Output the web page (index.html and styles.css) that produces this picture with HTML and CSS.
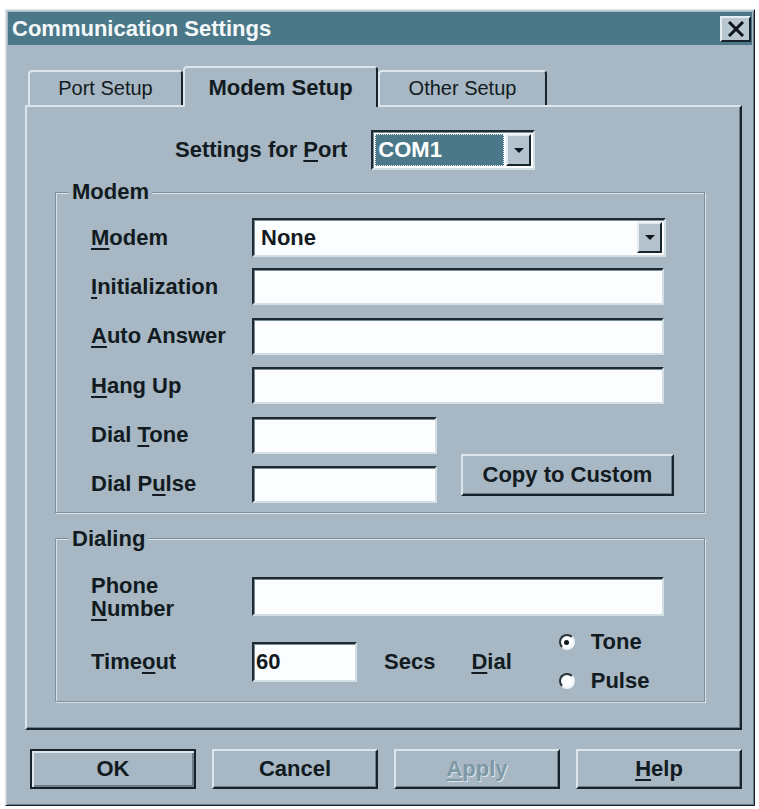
FILE: index.html
```html
<!DOCTYPE html>
<html>
<head>
<meta charset="utf-8">
<title>Communication Settings</title>
<link rel="stylesheet" href="styles.css">
</head>
<body>
<div class="dialog">
  <div class="titlebar">
    <span class="title">Communication Settings</span>
    <span class="close"><svg width="18" height="16" viewBox="0 0 18 16"><path d="M2 1 L16 15 M16 1 L2 15" stroke="#0e161b" stroke-width="3" fill="none"/></svg></span>
  </div>

  <div class="tabs">
    <div class="tab">Port Setup</div>
    <div class="tab active">Modem Setup</div>
    <div class="tab">Other Setup</div>
  </div>

  <div class="panel">
    <div class="port-row">
      <span class="lbl">Settings for <u>P</u>ort</span>
      <div class="combo port-combo">
        <span class="sel">COM1</span>
        <span class="drop"><i class="tri"></i></span>
      </div>
    </div>

    <fieldset class="group modem">
      <legend>Modem</legend>
      <div class="mgrid">
        <span class="lbl"><u>M</u>odem</span>
        <div class="combo wide"><span class="val">None</span><span class="drop"><i class="tri"></i></span></div>

        <span class="lbl"><u>I</u>nitialization</span>
        <div class="field wide"></div>

        <span class="lbl"><u>A</u>uto Answer</span>
        <div class="field wide"></div>

        <span class="lbl"><u>H</u>ang Up</span>
        <div class="field wide"></div>

        <span class="lbl">Dial <u>T</u>one</span>
        <div class="field short"></div>

        <span class="btn copy">Copy to Custom</span>

        <span class="lbl">Dial P<u>u</u>lse</span>
        <div class="field short"></div>
      </div>
    </fieldset>

    <fieldset class="group dialing">
      <legend>Dialing</legend>
      <div class="phone-row">
        <span class="lbl two">Phone<br><u>N</u>umber</span>
        <div class="field phone"></div>
      </div>
      <div class="timeout-row">
        <span class="lbl tlabel">Time<u>o</u>ut</span>
        <div class="field tfield"><span class="val">60</span></div>
        <span class="lbl secs">Secs</span>
        <span class="lbl dial"><u>D</u>ial</span>
        <div class="radios">
          <div class="radio-item"><span class="radio on"></span><span class="lbl">Tone</span></div>
          <div class="radio-item"><span class="radio"></span><span class="lbl">Pulse</span></div>
        </div>
      </div>
    </fieldset>
  </div>

  <div class="buttons">
    <span class="btn default">OK</span>
    <span class="btn">Cancel</span>
    <span class="btn disabled"><u>A</u>pply</span>
    <span class="btn"><u>H</u>elp</span>
  </div>
</div>
</body>
</html>
```

FILE: styles.css
```css
html, body {
  margin: 0;
  padding: 0;
  background: #ffffff;
}

body {
  font-family: "Liberation Sans", Arial, sans-serif;
  color: #121b21;
}

.dialog {
  margin: 9px 0 0 5px;
  width: 750px;
  height: 797px;
  box-sizing: border-box;
  background: #a7b7c3;
  border: 1px solid;
  border-color: #dbe5eb #17232b #17232b #dbe5eb;
  box-shadow: inset 1px 1px 0 #c3cfd8, inset -1px -1px 0 #6c7e8a;
  padding: 2px;
}

/* Title bar */
.titlebar {
  height: 33px;
  background: #4b7888;
  display: flex;
  align-items: center;
  justify-content: space-between;
  padding-left: 4px;
}

.title {
  color: #f4f8fa;
  font-weight: bold;
  font-size: 22px;
}

.close {
  width: 31px;
  height: 26px;
  box-sizing: border-box;
  margin-right: 1px;
  background: #b9c7d0;
  border: 2px solid;
  border-color: #e4ecf0 #17232b #17232b #e4ecf0;
  display: flex;
  align-items: center;
  justify-content: center;
}

/* Tabs */
.tabs {
  display: flex;
  align-items: flex-end;
  margin: 21px 0 0 17px;
  padding-left: 3px;
}

.tab {
  box-sizing: border-box;
  height: 35px;
  line-height: 33px;
  text-align: center;
  font-size: 20px;
  background: #a7b7c3;
  border-top: 2px solid #dbe5eb;
  border-left: 2px solid #dbe5eb;
  border-right: 2px solid #17232b;
  border-radius: 4px 4px 0 0;
  width: 155px;
}

.tab:last-child {
  width: 169px;
}

.tab.active {
  width: 195px;
  height: 41px;
  line-height: 39px;
  font-size: 22px;
  font-weight: bold;
  margin-bottom: -2px;
  position: relative;
  z-index: 2;
}

/* Panel */
.panel {
  margin-left: 17px;
  width: 717px;
  height: 625px;
  box-sizing: border-box;
  border: 2px solid;
  border-color: #dbe5eb #17232b #17232b #dbe5eb;
  box-shadow: inset -1px -1px 0 #6c7e8a;
}

.lbl {
  font-size: 22px;
  font-weight: bold;
  white-space: nowrap;
}

u {
  text-decoration-thickness: 2px;
  text-underline-offset: 3px;
}

.port-row {
  display: flex;
  align-items: center;
  margin-top: 23px;
  padding-left: 148px;
  gap: 24px;
}

/* Sunken fields */
.field, .combo {
  box-sizing: border-box;
  background: #fcfdfe;
  border: 2px solid;
  border-color: #1d2a32 #d3dee5 #d3dee5 #1d2a32;
  box-shadow: inset 1px 1px 0 #7a8c98;
}

.combo {
  display: flex;
  align-items: center;
  justify-content: space-between;
  padding: 2px;
}

.port-combo {
  width: 164px;
  height: 40px;
}

.sel {
  flex: 1;
  align-self: stretch;
  background: #4b7888;
  color: #ffffff;
  font-size: 22px;
  font-weight: bold;
  display: flex;
  align-items: center;
  padding-left: 3px;
  outline: 1px dotted #e8eef2;
  outline-offset: -1px;
  margin-right: 2px;
}

.drop {
  width: 25px;
  align-self: stretch;
  box-sizing: border-box;
  background: #b3c2cc;
  border: 2px solid;
  border-color: #e4ecf0 #17232b #17232b #e4ecf0;
  display: flex;
  align-items: center;
  justify-content: center;
}

.tri {
  width: 0;
  height: 0;
  border-left: 5px solid transparent;
  border-right: 5px solid transparent;
  border-top: 5px solid #0e161b;
}

.val {
  font-size: 22px;
  font-weight: bold;
  padding-left: 5px;
}

/* Group boxes */
.group {
  margin: 12px 0 0 28px;
  width: 650px;
  box-sizing: border-box;
  border: 1px solid #7e909c;
  box-shadow: inset 1px 1px 0 #d7e1e8, 1px 1px 0 #d7e1e8;
  padding: 0;
}

.group legend {
  font-size: 22px;
  font-weight: bold;
  line-height: 20px;
  padding: 0 3px;
  margin-left: 13px;
  background: #a7b7c3;
}

.modem {
  padding: 17px 0 9px 0;
}

.mgrid {
  display: grid;
  grid-template-columns: 161px 185px 1fr;
  grid-auto-rows: 37px;
  row-gap: 12.4px;
  align-items: center;
  padding-left: 35px;
}

.mgrid .lbl {
  grid-column: 1;
}

.field.wide {
  grid-column: 2 / 4;
  width: 412px;
  height: 37px;
}

.combo.wide {
  grid-column: 2 / 4;
  width: 414px;
  height: 39px;
}

.field.short {
  grid-column: 2;
  width: 185px;
  height: 37px;
}

.copy {
  grid-column: 3;
  grid-row: 5 / 7;
  align-self: end;
  justify-self: start;
  margin: 0 0 7px 24px;
  width: 213px;
  height: 42px;
}

/* Buttons */
.btn {
  box-sizing: border-box;
  display: flex;
  align-items: center;
  justify-content: center;
  font-size: 22px;
  font-weight: bold;
  background: #a7b7c3;
  border: 2px solid;
  border-color: #dbe5eb #17232b #17232b #dbe5eb;
  box-shadow: inset -1px -1px 0 #6c7e8a;
}

/* Dialing */
.dialing {
  margin-top: 16px;
  padding: 25px 0 19px 0;
}

.phone-row {
  display: flex;
  align-items: center;
  padding-left: 35px;
}

.lbl.two {
  width: 161px;
  line-height: 23px;
}

.field.phone {
  width: 412px;
  height: 39px;
}

.timeout-row {
  display: flex;
  align-items: center;
  height: 40px;
  margin-top: 22px;
  padding-left: 35px;
}

.tlabel {
  width: 161px;
}

.tfield {
  width: 105px;
  height: 40px;
  display: flex;
  align-items: center;
}

.tfield .val {
  padding-left: 2px;
}

.secs {
  margin-left: 27px;
}

.dial {
  margin-left: 36px;
}

.radios {
  margin-left: 47px;
  display: flex;
  flex-direction: column;
  gap: 13px;
}

.radio-item {
  display: flex;
  align-items: center;
  gap: 16px;
  height: 26px;
}

.radio {
  width: 16px;
  height: 16px;
  box-sizing: border-box;
  border-radius: 50%;
  background: #fcfdfe;
  border: 2px solid;
  border-color: #26343c #eef3f6 #eef3f6 #26343c;
  display: flex;
  align-items: center;
  justify-content: center;
}

.radio.on::after {
  content: "";
  width: 5px;
  height: 5px;
  border-radius: 50%;
  background: #0e161b;
}

/* Bottom buttons */
.buttons {
  display: flex;
  gap: 16px;
  margin-top: 19px;
  padding-left: 22px;
}

.buttons .btn {
  width: 166px;
  height: 40px;
}

.btn.default {
  border-color: #17232b;
  box-shadow: inset 2px 2px 0 #dbe5eb, inset -2px -2px 0 #6c7e8a;
}

.btn.disabled {
  color: #7f98a6;
  text-shadow: 1px 1px 0 #dbe5eb;
}
```
